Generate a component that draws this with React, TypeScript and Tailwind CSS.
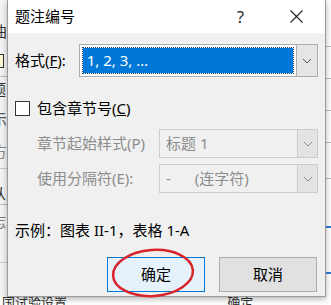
const font = "[font-family:'Noto_Sans','Noto_Sans_CJK_SC',sans-serif]";

const Chevron = ({ color = "#5a5a5a" }: { color?: string }) => (
  <svg width="10" height="6" viewBox="0 0 10 6">
    <path d="M1 1 L5 5 L9 1" fill="none" stroke={color} strokeWidth="1" />
  </svg>
);

const DisabledCombo = ({ value }: { value: React.ReactNode }) => (
  <div className="flex h-[29px] w-[159px] border border-[#cccccc] bg-[#f0f0f0]">
    <div className="flex flex-1 items-center pl-[6px] text-[15px] leading-none text-[#8d8d8d]">{value}</div>
    <div className="flex w-[20px] items-center justify-center border-l border-[#cccccc] bg-[#e3e3e3]">
      <Chevron color="#8a8a8a" />
    </div>
  </div>
);

export default function App() {
  return (
    <div className={`relative h-[305px] w-[331px] overflow-hidden bg-white ${font}`}>
      {/* document behind the dialog */}
      <div className="absolute left-0 top-0 h-full w-[8px] bg-[#f4f4f4]">
        <div className="absolute -left-[8px] top-[24px] text-[15px] leading-none text-[#333]">曲</div>
        <div className="absolute -left-[6px] top-[54px] h-[14px] w-[10px] border border-[#333] bg-[#fdf5cf]" />
        <div className="absolute -left-[9px] top-[82px] text-[15px] leading-none text-[#333]">题</div>
        <div className="absolute -left-[8px] top-[112px] text-[15px] leading-none text-[#555]">示</div>
        <div className="absolute -left-[8px] top-[144px] text-[15px] leading-none text-[#888]">方</div>
        <div className="absolute -left-[9px] top-[186px] text-[15px] leading-none text-[#333]">从</div>
        <div className="absolute -left-[9px] top-[214px] text-[15px] leading-none text-[#777]">志</div>
        <div className="absolute left-0 top-[76px] h-px w-full bg-[#bbb]" />
        <div className="absolute left-0 top-[168px] h-px w-full bg-[#ccc]" />
        <div className="absolute left-0 top-[204px] h-px w-full bg-[#bbb]" />
        <div className="absolute left-0 top-[262px] h-px w-full bg-[#ccc]" />
      </div>
      <div className="absolute right-0 top-0 h-full w-[6px] bg-white">
        <div className="absolute left-0 top-[46px] h-px w-full bg-[#bbb]" />
        <div className="absolute left-0 top-[78px] h-px w-full bg-[#bbb]" />
        <div className="absolute left-0 top-[110px] h-px w-full bg-[#bbb]" />
        <div className="absolute left-0 top-[142px] h-px w-full bg-[#bbb]" />
        <div className="absolute left-0 top-[178px] h-px w-full bg-[#bbb]" />
        <div className="absolute left-0 top-[226px] h-[2px] w-full bg-[#2b7cd3]" />
        <div className="absolute left-0 top-[272px] h-[2px] w-full bg-[#2b7cd3]" />
      </div>
      <div className="absolute bottom-0 left-0 h-[8px] w-full bg-white">
        <div className="flex h-full items-start gap-[40px] pl-[2px] text-[13px] leading-[10px] text-[#333]">
          <span>国试验设置…</span>
          <span className="pl-[110px]">确定</span>
        </div>
      </div>

      {/* dialog window */}
      <div className="absolute left-[7px] top-0 flex h-[297px] w-[319px] flex-col border-x border-b border-[#9a9a9a] bg-[#f0f0f0] shadow-[0_2px_6px_rgba(0,0,0,0.3)]">
        <div className="flex h-[33px] items-center bg-white pl-[7px] pr-[22px]">
          <span className="flex-1 text-[15px] leading-none text-black">题注编号</span>
          <span className="mr-[46px] text-[16px] leading-none text-[#222]">?</span>
          <svg width="13" height="13" viewBox="0 0 13 13">
            <path d="M0.5 0.5 L12.5 12.5 M12.5 0.5 L0.5 12.5" stroke="#222" strokeWidth="1.1" />
          </svg>
        </div>

        <div className="flex flex-col px-[7px] text-[15px] leading-none text-black">
          <div className="mt-[11px] flex items-center">
            <span className="w-[64px]">格式(<span className="underline">F</span>):</span>
            <div className="flex h-[33px] w-[240px] border border-[#adadad] bg-white">
              <div className="m-[3px] flex flex-1 items-center bg-[#0078d7] pl-[4px] text-white outline-1 outline-dotted outline-[#1d3b5a]">
                1, 2, 3, …
              </div>
              <div className="flex w-[21px] items-center justify-center border-l border-[#adadad] bg-[#e5e5e5]">
                <Chevron />
              </div>
            </div>
          </div>

          <div className="mt-[24px] flex items-center">
            <div className="h-[15px] w-[15px] border border-[#333] bg-white" />
            <span className="ml-[7px]">包含章节号(<span className="underline">C</span>)</span>
          </div>

          <div className="mt-[13px] flex items-center pl-[22px] text-[#8d8d8d]">
            <span className="w-[122px]">章节起始样式(P)</span>
            <DisabledCombo value="标题 1" />
          </div>
          <div className="mt-[6px] flex items-center pl-[22px] text-[#8d8d8d]">
            <span className="w-[122px]">使用分隔符(E):</span>
            <DisabledCombo value={<><span>-</span><span className="ml-[24px]">(连字符)</span></>} />
          </div>

          <div className="mt-[30px]">示例：图表 II-1，表格 1-A</div>

          <div className="mt-[19px] flex justify-end gap-[14px] pr-[1px]">
            <div className="flex h-[35px] w-[98px] items-center justify-center border border-[#0078d7] bg-[#e5f1fb]">确定</div>
            <div className="flex h-[35px] w-[98px] items-center justify-center border border-[#adadad] bg-[#e1e1e1]">取消</div>
          </div>
        </div>
      </div>

      {/* red marker circle */}
      <svg className="absolute left-[108px] top-[246px]" width="92" height="56" viewBox="0 0 92 56">
        <ellipse cx="45" cy="27" rx="40" ry="23" fill="none" stroke="#d8242a" strokeWidth="2.5" transform="rotate(-4 45 27)" />
      </svg>
    </div>
  );
}
